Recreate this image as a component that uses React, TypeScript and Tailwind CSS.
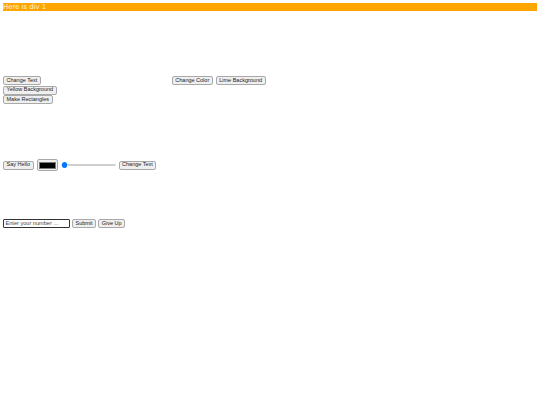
import React from 'react';

const font = "font-['Liberation_Sans',Arial,sans-serif]";
const btn = `${font} h-[9px] px-[2.5px] bg-[#efefef] border border-[#a9a9a9] rounded-[2px] text-[5.5px] leading-none text-[#222] whitespace-nowrap flex items-center`;

function Btn({ children }: { children: React.ReactNode }) {
  return <button className={btn}>{children}</button>;
}

export default function App() {
  return (
    <div className="w-[540px] h-[405px] bg-white px-[3px] pt-[3px]">
      <div className="h-[8px] bg-[#ffa500] text-[6.9px] leading-[8px] text-[#fff3dc] font-['DejaVu_Sans',sans-serif]">
        Here is div 1
      </div>

      <div className="mt-[65px] flex flex-col gap-[0.5px]">
        <div className="flex items-center">
          <Btn>Change Text</Btn>
          <div className="ml-[131px] flex gap-[3px]">
            <Btn>Change Color</Btn>
            <Btn>Lime Background</Btn>
          </div>
        </div>
        <div className="flex">
          <Btn>Yellow Background</Btn>
        </div>
        <div className="flex">
          <Btn>Make Rectangles</Btn>
        </div>
      </div>

      <div className="mt-[55px] flex items-center gap-[3px]">
        <Btn>Say Hello</Btn>
        <div className="w-[21px] h-[12px] bg-[#efefef] border border-[#a9a9a9] rounded-[2px] flex items-center justify-center">
          <div className="w-[17px] h-[7px] bg-black border border-[#777]" />
        </div>
        <div className="relative w-[55px] h-[6px] flex items-center">
          <div className="w-full h-[2.5px] rounded-full bg-[#efefef] border border-[#cfcfcf]" />
          <div className="absolute left-[1px] w-[5.5px] h-[5.5px] rounded-full bg-[#0075ff]" />
        </div>
        <Btn>Change Text</Btn>
      </div>

      <div className="mt-[48px] flex items-center gap-[2px]">
        <div className={`w-[67px] h-[9px] border border-[#333] rounded-[1px] px-[1.5px] text-[5.6px] leading-none text-[#444] flex items-center ${font}`}>
          Enter your number ...
        </div>
        <Btn>Submit</Btn>
        <Btn>Give Up</Btn>
      </div>
    </div>
  );
}
